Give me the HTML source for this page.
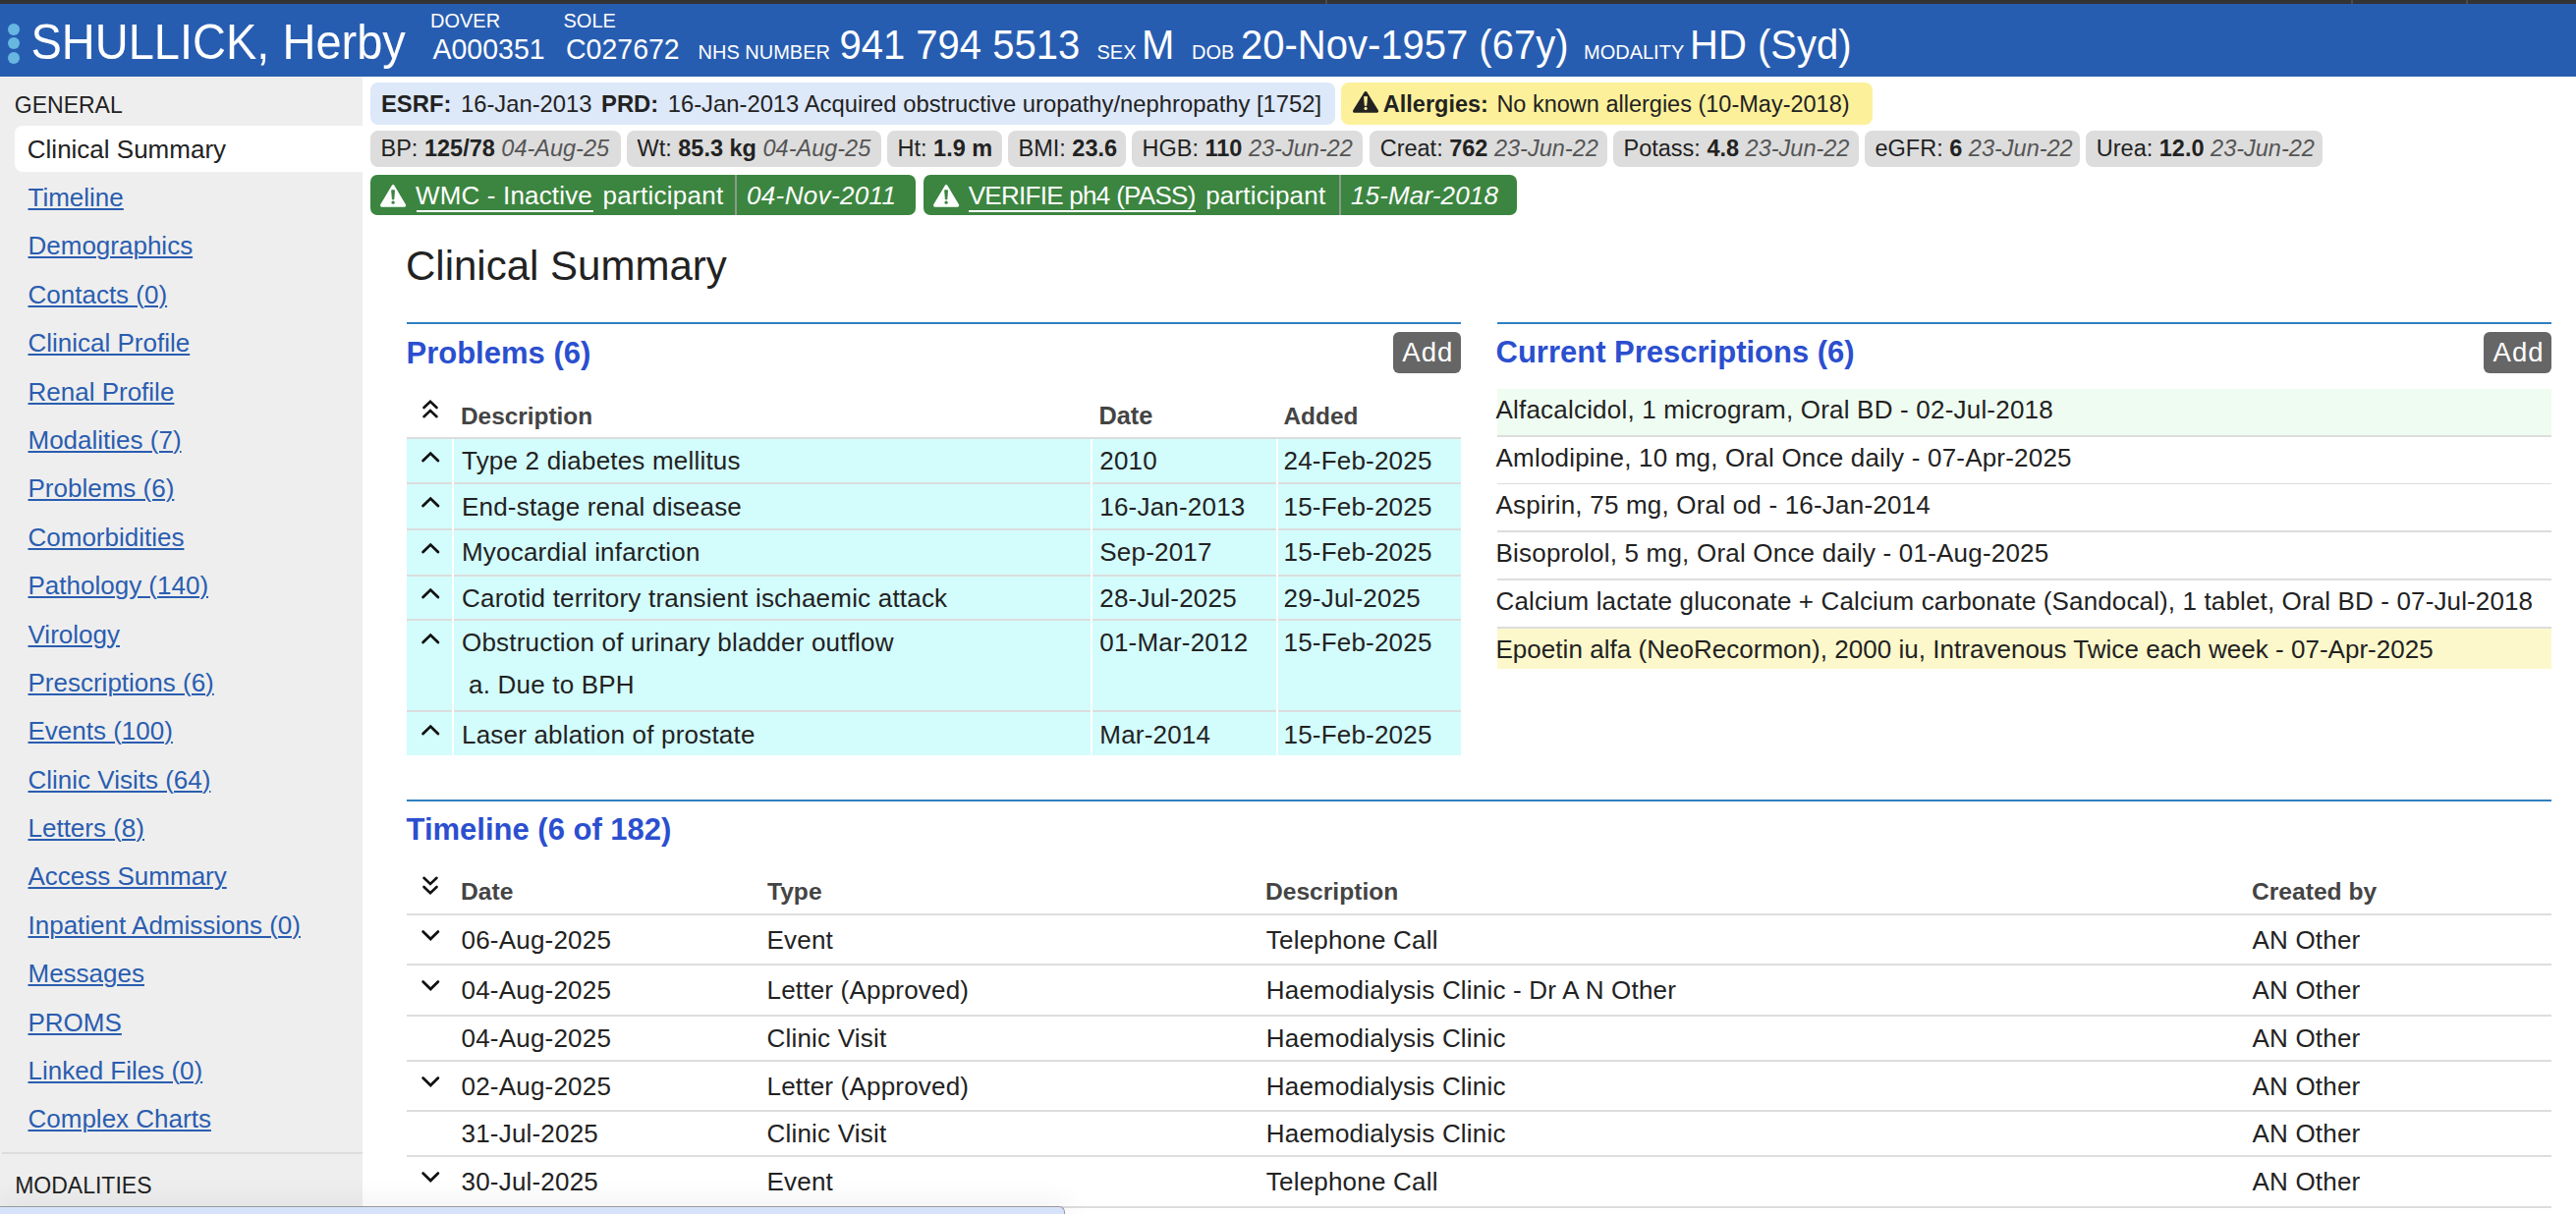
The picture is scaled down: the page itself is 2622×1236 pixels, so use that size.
<!DOCTYPE html>
<html><head><meta charset="utf-8">
<style>
*{box-sizing:border-box;margin:0;padding:0}
html,body{width:2622px;height:1236px;overflow:hidden;background:#fff}
body{font-family:"Liberation Sans",sans-serif;color:#222;position:relative}
.a{position:absolute;white-space:nowrap}
.hw{color:#fff}
.lk{color:#2a5db0;text-decoration:underline;text-decoration-thickness:2px;text-underline-offset:2px}
b{font-weight:bold}
i{font-style:italic}
.g{color:#555;font-style:italic}
.r{letter-spacing:0.2px}
svg{position:absolute;overflow:visible}
</style></head><body>
<div class="a" style="left:0.00px;top:0.00px;width:2622.00px;height:4.00px;background:#333"></div>
<div class="a" style="left:0.00px;top:4.00px;width:2622.00px;height:74.00px;background:#275db1"></div>
<div class="a" style="left:8.00px;top:23.70px;width:12.00px;height:12.00px;border-radius:50%;background:#67b7e1"></div>
<div class="a" style="left:8.00px;top:38.00px;width:12.00px;height:12.00px;border-radius:50%;background:#67b7e1"></div>
<div class="a" style="left:8.00px;top:52.60px;width:12.00px;height:12.00px;border-radius:50%;background:#67b7e1"></div>
<div class="a hw" style="left:31.50px;top:20.31px;font-size:47px;line-height:47px;transform-origin:0 39.79px;transform:scaleY(1.045)">SHULLICK, Herby</div>
<div class="a hw" style="left:438.00px;top:10.87px;font-size:20px;line-height:20px;transform-origin:0 16.93px;transform:scaleY(1.045)">DOVER</div>
<div class="a hw" style="left:440.50px;top:35.77px;font-size:28.5px;line-height:28.5px;transform-origin:0 24.13px;transform:scaleY(1.045)">A000351</div>
<div class="a hw" style="left:573.50px;top:10.87px;font-size:20px;line-height:20px;transform-origin:0 16.93px;transform:scaleY(1.045)">SOLE</div>
<div class="a hw" style="left:576.00px;top:35.77px;font-size:28.5px;line-height:28.5px;transform-origin:0 24.13px;transform:scaleY(1.045)">C027672</div>
<div class="a hw" style="left:710.50px;top:43.27px;font-size:20px;line-height:20px;transform-origin:0 16.93px;transform:scaleY(1.045)">NHS NUMBER</div>
<div class="a hw" style="left:854.50px;top:26.44px;font-size:40px;line-height:40px;transform-origin:0 33.86px;transform:scaleY(1.045)">941 794 5513</div>
<div class="a hw" style="left:1116.50px;top:43.27px;font-size:20px;line-height:20px;transform-origin:0 16.93px;transform:scaleY(1.045)">SEX</div>
<div class="a hw" style="left:1162.00px;top:26.44px;font-size:40px;line-height:40px;transform-origin:0 33.86px;transform:scaleY(1.045)">M</div>
<div class="a hw" style="left:1213.00px;top:43.27px;font-size:20px;line-height:20px;transform-origin:0 16.93px;transform:scaleY(1.045)">DOB</div>
<div class="a hw" style="left:1263.00px;top:26.44px;font-size:40px;line-height:40px;transform-origin:0 33.86px;transform:scaleY(1.045)">20-Nov-1957 (67y)</div>
<div class="a hw" style="left:1612.00px;top:43.27px;font-size:20px;line-height:20px;transform-origin:0 16.93px;transform:scaleY(1.045)">MODALITY</div>
<div class="a hw" style="left:1720.00px;top:26.44px;font-size:40px;line-height:40px;transform-origin:0 33.86px;transform:scaleY(1.045)">HD (Syd)</div>
<div class="a" style="left:0.00px;top:78.00px;width:369.00px;height:1158.00px;background:#eeeeee"></div>
<div class="a" style="left:14.80px;top:95.63px;font-size:23px;line-height:23px;">GENERAL</div>
<div class="a" style="left:15.00px;top:128.30px;width:354.00px;height:46.40px;background:#fff;border-radius:8px 0 0 8px"></div>
<div class="a" style="left:27.80px;top:138.99px;font-size:26px;line-height:26px;">Clinical Summary</div>
<div class="a lk" style="left:28.50px;top:188.09px;font-size:26px;line-height:26px;">Timeline</div>
<div class="a lk" style="left:28.50px;top:237.47px;font-size:26px;line-height:26px;">Demographics</div>
<div class="a lk" style="left:28.50px;top:286.85px;font-size:26px;line-height:26px;">Contacts (0)</div>
<div class="a lk" style="left:28.50px;top:336.23px;font-size:26px;line-height:26px;">Clinical Profile</div>
<div class="a lk" style="left:28.50px;top:385.61px;font-size:26px;line-height:26px;">Renal Profile</div>
<div class="a lk" style="left:28.50px;top:434.99px;font-size:26px;line-height:26px;">Modalities (7)</div>
<div class="a lk" style="left:28.50px;top:484.37px;font-size:26px;line-height:26px;">Problems (6)</div>
<div class="a lk" style="left:28.50px;top:533.75px;font-size:26px;line-height:26px;">Comorbidities</div>
<div class="a lk" style="left:28.50px;top:583.13px;font-size:26px;line-height:26px;">Pathology (140)</div>
<div class="a lk" style="left:28.50px;top:632.51px;font-size:26px;line-height:26px;">Virology</div>
<div class="a lk" style="left:28.50px;top:681.89px;font-size:26px;line-height:26px;">Prescriptions (6)</div>
<div class="a lk" style="left:28.50px;top:731.27px;font-size:26px;line-height:26px;">Events (100)</div>
<div class="a lk" style="left:28.50px;top:780.65px;font-size:26px;line-height:26px;">Clinic Visits (64)</div>
<div class="a lk" style="left:28.50px;top:830.03px;font-size:26px;line-height:26px;">Letters (8)</div>
<div class="a lk" style="left:28.50px;top:879.41px;font-size:26px;line-height:26px;">Access Summary</div>
<div class="a lk" style="left:28.50px;top:928.79px;font-size:26px;line-height:26px;">Inpatient Admissions (0)</div>
<div class="a lk" style="left:28.50px;top:978.17px;font-size:26px;line-height:26px;">Messages</div>
<div class="a lk" style="left:28.50px;top:1027.55px;font-size:26px;line-height:26px;">PROMS</div>
<div class="a lk" style="left:28.50px;top:1076.93px;font-size:26px;line-height:26px;">Linked Files (0)</div>
<div class="a lk" style="left:28.50px;top:1126.31px;font-size:26px;line-height:26px;">Complex Charts</div>
<div class="a" style="left:2.00px;top:1173.00px;width:367.00px;height:2.00px;background:#dddddd"></div>
<div class="a" style="left:15.20px;top:1195.63px;font-size:23px;line-height:23px;">MODALITIES</div>
<div class="a" style="left:377.00px;top:84.00px;width:981.80px;height:42.50px;background:#dde8f9;border-radius:8px"></div>
<div class="a" style="left:388.00px;top:93.65px;font-size:23.8px;line-height:23.8px;"><b>ESRF:</b><span style="margin-left:9.5px">16-Jan-2013</span><b style="margin-left:9.5px">PRD:</b><span style="margin-left:9.5px">16-Jan-2013 Acquired obstructive uropathy/nephropathy [1752]</span></div>
<div class="a" style="left:1365.20px;top:84.00px;width:540.50px;height:42.50px;background:#fcf09b;border-radius:8px"></div>
<svg style="left:1376.9px;top:92.9px" width="26.1" height="21.8" viewBox="0 0 26.1 21.8"><path d="M13.05 1.7 L24.5 20.2 L1.6 20.2 Z" fill="#222" stroke="#222" stroke-width="3.2" stroke-linejoin="round"/><path d="M11.55 5.45 L14.55 5.45 L13.850000000000001 14.388000000000002 L12.25 14.388000000000002 Z" fill="#fcf09b" stroke="#fcf09b" stroke-width="0.8" stroke-linejoin="round"/><circle cx="13.05" cy="17.44" r="1.6" fill="#fcf09b"/></svg>
<div class="a" style="left:1407.80px;top:95.11px;font-size:23.5px;line-height:23.5px;"><b>Allergies:</b><span style="margin-left:8.5px">No known allergies (10-May-2018)</span></div>
<div class="a" style="left:377.00px;top:133.20px;width:254.70px;height:36.50px;background:#dddddd;border-radius:8px"></div>
<div class="a" style="left:387.50px;top:140.21px;font-size:23.5px;line-height:23.5px;">BP: <b>125/78</b> <span class="g">04-Aug-25</span></div>
<div class="a" style="left:638.00px;top:133.20px;width:258.50px;height:36.50px;background:#dddddd;border-radius:8px"></div>
<div class="a" style="left:648.50px;top:140.21px;font-size:23.5px;line-height:23.5px;">Wt: <b>85.3 kg</b> <span class="g">04-Aug-25</span></div>
<div class="a" style="left:903.00px;top:133.20px;width:116.50px;height:36.50px;background:#dddddd;border-radius:8px"></div>
<div class="a" style="left:913.50px;top:140.21px;font-size:23.5px;line-height:23.5px;">Ht: <b>1.9 m</b></div>
<div class="a" style="left:1026.00px;top:133.20px;width:119.60px;height:36.50px;background:#dddddd;border-radius:8px"></div>
<div class="a" style="left:1036.50px;top:140.21px;font-size:23.5px;line-height:23.5px;">BMI: <b>23.6</b></div>
<div class="a" style="left:1152.00px;top:133.20px;width:235.30px;height:36.50px;background:#dddddd;border-radius:8px"></div>
<div class="a" style="left:1162.50px;top:140.21px;font-size:23.5px;line-height:23.5px;">HGB: <b>110</b> <span class="g">23-Jun-22</span></div>
<div class="a" style="left:1394.20px;top:133.20px;width:241.40px;height:36.50px;background:#dddddd;border-radius:8px"></div>
<div class="a" style="left:1404.70px;top:140.21px;font-size:23.5px;line-height:23.5px;">Creat: <b>762</b> <span class="g">23-Jun-22</span></div>
<div class="a" style="left:1642.00px;top:133.20px;width:249.60px;height:36.50px;background:#dddddd;border-radius:8px"></div>
<div class="a" style="left:1652.50px;top:140.21px;font-size:23.5px;line-height:23.5px;">Potass: <b>4.8</b> <span class="g">23-Jun-22</span></div>
<div class="a" style="left:1898.00px;top:133.20px;width:218.70px;height:36.50px;background:#dddddd;border-radius:8px"></div>
<div class="a" style="left:1908.50px;top:140.21px;font-size:23.5px;line-height:23.5px;">eGFR: <b>6</b> <span class="g">23-Jun-22</span></div>
<div class="a" style="left:2123.30px;top:133.20px;width:240.70px;height:36.50px;background:#dddddd;border-radius:8px"></div>
<div class="a" style="left:2133.80px;top:140.21px;font-size:23.5px;line-height:23.5px;">Urea: <b>12.0</b> <span class="g">23-Jun-22</span></div>
<div class="a" style="left:377.00px;top:178.00px;width:554.80px;height:40.80px;background:#3c8540;border-radius:7px"></div>
<svg style="left:386.9px;top:187.5px" width="26.2" height="22.7" viewBox="0 0 26.2 22.7"><path d="M13.1 1.7 L24.599999999999998 21.099999999999998 L1.6 21.099999999999998 Z" fill="#fff" stroke="#fff" stroke-width="3.2" stroke-linejoin="round"/><path d="M11.6 5.675 L14.6 5.675 L13.9 14.982000000000001 L12.299999999999999 14.982000000000001 Z" fill="#3c8540" stroke="#3c8540" stroke-width="0.8" stroke-linejoin="round"/><circle cx="13.1" cy="18.16" r="1.6" fill="#3c8540"/></svg>
<div class="a hw" style="left:423.00px;top:186.09px;font-size:26px;line-height:26px;letter-spacing:0.16px">WMC - Inactive</div>
<div class="a" style="left:423.70px;top:214.00px;width:180.10px;height:2.00px;background:#fff"></div>
<div class="a hw" style="left:613.50px;top:186.09px;font-size:26px;line-height:26px;letter-spacing:0.28px">participant</div>
<div class="a" style="left:748.00px;top:178.00px;width:2.00px;height:40.80px;background:#8a9a8a"></div>
<div class="a hw" style="left:760.00px;top:186.09px;font-size:26px;line-height:26px;letter-spacing:0.35px"><i>04-Nov-2011</i></div>
<div class="a" style="left:940.30px;top:178.00px;width:603.60px;height:40.80px;background:#3c8540;border-radius:7px"></div>
<svg style="left:950px;top:187.5px" width="26.2" height="22.7" viewBox="0 0 26.2 22.7"><path d="M13.1 1.7 L24.599999999999998 21.099999999999998 L1.6 21.099999999999998 Z" fill="#fff" stroke="#fff" stroke-width="3.2" stroke-linejoin="round"/><path d="M11.6 5.675 L14.6 5.675 L13.9 14.982000000000001 L12.299999999999999 14.982000000000001 Z" fill="#3c8540" stroke="#3c8540" stroke-width="0.8" stroke-linejoin="round"/><circle cx="13.1" cy="18.16" r="1.6" fill="#3c8540"/></svg>
<div class="a hw" style="left:985.70px;top:186.09px;font-size:26px;line-height:26px;letter-spacing:-0.71px">VERIFIE ph4 (PASS)</div>
<div class="a" style="left:986.40px;top:214.00px;width:230.50px;height:2.00px;background:#fff"></div>
<div class="a hw" style="left:1227.20px;top:186.09px;font-size:26px;line-height:26px;letter-spacing:0.2px">participant</div>
<div class="a" style="left:1363.00px;top:178.00px;width:2.00px;height:40.80px;background:#8a9a8a"></div>
<div class="a hw" style="left:1375.00px;top:186.09px;font-size:26px;line-height:26px;letter-spacing:0.15px"><i>15-Mar-2018</i></div>
<div class="a" style="left:413.00px;top:249.65px;font-size:42px;line-height:42px;">Clinical Summary</div>
<div class="a" style="left:414.00px;top:328.00px;width:1072.70px;height:2.00px;background:#2f80bf"></div>
<div class="a" style="left:413.50px;top:343.76px;font-size:31px;line-height:31px;font-weight:bold;color:#2b4fcf">Problems (6)</div>
<div class="a" style="left:1418.00px;top:338.00px;width:68.70px;height:41.50px;background:#666;border-radius:6px"></div>
<div class="a hw" style="left:1427.30px;top:344.52px;font-size:27.5px;line-height:27.5px;letter-spacing:1px">Add</div>
<svg style="left:429.5px;top:407px" width="16" height="19" viewBox="0 0 16 19"><path d="M1.5 8 L8 1.8 L14.5 8 M1.5 17.2 L8 11 L14.5 17.2" fill="none" stroke="#111" stroke-width="2.6" stroke-linecap="round"/></svg>
<div class="a" style="left:469.00px;top:411.65px;font-size:24.4px;line-height:24.4px;font-weight:bold;color:#444">Description</div>
<div class="a" style="left:1118.50px;top:410.88px;font-size:25.3px;line-height:25.3px;font-weight:bold;color:#444">Date</div>
<div class="a" style="left:1306.50px;top:411.65px;font-size:24.4px;line-height:24.4px;font-weight:bold;color:#444">Added</div>
<div class="a" style="left:414.00px;top:445.00px;width:1072.70px;height:2.00px;background:#dddddd"></div>
<div class="a" style="left:414.00px;top:447.00px;width:46.00px;height:44.20px;background:#d3fcfc"></div>
<div class="a" style="left:414.00px;top:491.20px;width:46.00px;height:2.00px;background:#dddddd"></div>
<div class="a" style="left:462.00px;top:447.00px;width:647.70px;height:44.20px;background:#d3fcfc"></div>
<div class="a" style="left:462.00px;top:491.20px;width:647.70px;height:2.00px;background:#dddddd"></div>
<div class="a" style="left:1111.70px;top:447.00px;width:187.10px;height:44.20px;background:#d3fcfc"></div>
<div class="a" style="left:1111.70px;top:491.20px;width:187.10px;height:2.00px;background:#dddddd"></div>
<div class="a" style="left:1300.80px;top:447.00px;width:185.90px;height:44.20px;background:#d3fcfc"></div>
<div class="a" style="left:1300.80px;top:491.20px;width:185.90px;height:2.00px;background:#dddddd"></div>
<svg style="left:428.7px;top:459.6px" width="18.5" height="10.5" viewBox="0 0 18.5 10.5"><path d="M1.6 9 L9.25 1.6 L16.9 9" fill="none" stroke="#111" stroke-width="2.8" stroke-linecap="round" stroke-linejoin="miter"/></svg>
<div class="a r" style="left:470.00px;top:456.49px;font-size:26px;line-height:26px;">Type 2 diabetes mellitus</div>
<div class="a r" style="left:1119.30px;top:456.49px;font-size:26px;line-height:26px;">2010</div>
<div class="a r" style="left:1306.50px;top:456.49px;font-size:26px;line-height:26px;">24-Feb-2025</div>
<div class="a" style="left:414.00px;top:493.20px;width:46.00px;height:44.80px;background:#d3fcfc"></div>
<div class="a" style="left:414.00px;top:538.00px;width:46.00px;height:2.00px;background:#dddddd"></div>
<div class="a" style="left:462.00px;top:493.20px;width:647.70px;height:44.80px;background:#d3fcfc"></div>
<div class="a" style="left:462.00px;top:538.00px;width:647.70px;height:2.00px;background:#dddddd"></div>
<div class="a" style="left:1111.70px;top:493.20px;width:187.10px;height:44.80px;background:#d3fcfc"></div>
<div class="a" style="left:1111.70px;top:538.00px;width:187.10px;height:2.00px;background:#dddddd"></div>
<div class="a" style="left:1300.80px;top:493.20px;width:185.90px;height:44.80px;background:#d3fcfc"></div>
<div class="a" style="left:1300.80px;top:538.00px;width:185.90px;height:2.00px;background:#dddddd"></div>
<svg style="left:428.7px;top:505.8px" width="18.5" height="10.5" viewBox="0 0 18.5 10.5"><path d="M1.6 9 L9.25 1.6 L16.9 9" fill="none" stroke="#111" stroke-width="2.8" stroke-linecap="round" stroke-linejoin="miter"/></svg>
<div class="a r" style="left:470.00px;top:502.69px;font-size:26px;line-height:26px;">End-stage renal disease</div>
<div class="a r" style="left:1119.30px;top:502.69px;font-size:26px;line-height:26px;">16-Jan-2013</div>
<div class="a r" style="left:1306.50px;top:502.69px;font-size:26px;line-height:26px;">15-Feb-2025</div>
<div class="a" style="left:414.00px;top:540.00px;width:46.00px;height:44.60px;background:#d3fcfc"></div>
<div class="a" style="left:414.00px;top:584.60px;width:46.00px;height:2.00px;background:#dddddd"></div>
<div class="a" style="left:462.00px;top:540.00px;width:647.70px;height:44.60px;background:#d3fcfc"></div>
<div class="a" style="left:462.00px;top:584.60px;width:647.70px;height:2.00px;background:#dddddd"></div>
<div class="a" style="left:1111.70px;top:540.00px;width:187.10px;height:44.60px;background:#d3fcfc"></div>
<div class="a" style="left:1111.70px;top:584.60px;width:187.10px;height:2.00px;background:#dddddd"></div>
<div class="a" style="left:1300.80px;top:540.00px;width:185.90px;height:44.60px;background:#d3fcfc"></div>
<div class="a" style="left:1300.80px;top:584.60px;width:185.90px;height:2.00px;background:#dddddd"></div>
<svg style="left:428.7px;top:552.6px" width="18.5" height="10.5" viewBox="0 0 18.5 10.5"><path d="M1.6 9 L9.25 1.6 L16.9 9" fill="none" stroke="#111" stroke-width="2.8" stroke-linecap="round" stroke-linejoin="miter"/></svg>
<div class="a r" style="left:470.00px;top:549.49px;font-size:26px;line-height:26px;">Myocardial infarction</div>
<div class="a r" style="left:1119.30px;top:549.49px;font-size:26px;line-height:26px;">Sep-2017</div>
<div class="a r" style="left:1306.50px;top:549.49px;font-size:26px;line-height:26px;">15-Feb-2025</div>
<div class="a" style="left:414.00px;top:586.60px;width:46.00px;height:43.40px;background:#d3fcfc"></div>
<div class="a" style="left:414.00px;top:630.00px;width:46.00px;height:2.00px;background:#dddddd"></div>
<div class="a" style="left:462.00px;top:586.60px;width:647.70px;height:43.40px;background:#d3fcfc"></div>
<div class="a" style="left:462.00px;top:630.00px;width:647.70px;height:2.00px;background:#dddddd"></div>
<div class="a" style="left:1111.70px;top:586.60px;width:187.10px;height:43.40px;background:#d3fcfc"></div>
<div class="a" style="left:1111.70px;top:630.00px;width:187.10px;height:2.00px;background:#dddddd"></div>
<div class="a" style="left:1300.80px;top:586.60px;width:185.90px;height:43.40px;background:#d3fcfc"></div>
<div class="a" style="left:1300.80px;top:630.00px;width:185.90px;height:2.00px;background:#dddddd"></div>
<svg style="left:428.7px;top:599.2px" width="18.5" height="10.5" viewBox="0 0 18.5 10.5"><path d="M1.6 9 L9.25 1.6 L16.9 9" fill="none" stroke="#111" stroke-width="2.8" stroke-linecap="round" stroke-linejoin="miter"/></svg>
<div class="a r" style="left:470.00px;top:596.09px;font-size:26px;line-height:26px;">Carotid territory transient ischaemic attack</div>
<div class="a r" style="left:1119.30px;top:596.09px;font-size:26px;line-height:26px;">28-Jul-2025</div>
<div class="a r" style="left:1306.50px;top:596.09px;font-size:26px;line-height:26px;">29-Jul-2025</div>
<div class="a" style="left:414.00px;top:632.00px;width:46.00px;height:91.20px;background:#d3fcfc"></div>
<div class="a" style="left:414.00px;top:723.20px;width:46.00px;height:2.00px;background:#dddddd"></div>
<div class="a" style="left:462.00px;top:632.00px;width:647.70px;height:91.20px;background:#d3fcfc"></div>
<div class="a" style="left:462.00px;top:723.20px;width:647.70px;height:2.00px;background:#dddddd"></div>
<div class="a" style="left:1111.70px;top:632.00px;width:187.10px;height:91.20px;background:#d3fcfc"></div>
<div class="a" style="left:1111.70px;top:723.20px;width:187.10px;height:2.00px;background:#dddddd"></div>
<div class="a" style="left:1300.80px;top:632.00px;width:185.90px;height:91.20px;background:#d3fcfc"></div>
<div class="a" style="left:1300.80px;top:723.20px;width:185.90px;height:2.00px;background:#dddddd"></div>
<svg style="left:428.7px;top:644.6px" width="18.5" height="10.5" viewBox="0 0 18.5 10.5"><path d="M1.6 9 L9.25 1.6 L16.9 9" fill="none" stroke="#111" stroke-width="2.8" stroke-linecap="round" stroke-linejoin="miter"/></svg>
<div class="a r" style="left:470.00px;top:641.49px;font-size:26px;line-height:26px;">Obstruction of urinary bladder outflow</div>
<div class="a r" style="left:1119.30px;top:641.49px;font-size:26px;line-height:26px;">01-Mar-2012</div>
<div class="a r" style="left:1306.50px;top:641.49px;font-size:26px;line-height:26px;">15-Feb-2025</div>
<div class="a r" style="left:477.00px;top:684.49px;font-size:26px;line-height:26px;">a. Due to BPH</div>
<div class="a" style="left:414.00px;top:725.20px;width:46.00px;height:43.70px;background:#d3fcfc"></div>
<div class="a" style="left:462.00px;top:725.20px;width:647.70px;height:43.70px;background:#d3fcfc"></div>
<div class="a" style="left:1111.70px;top:725.20px;width:187.10px;height:43.70px;background:#d3fcfc"></div>
<div class="a" style="left:1300.80px;top:725.20px;width:185.90px;height:43.70px;background:#d3fcfc"></div>
<svg style="left:428.7px;top:737.8000000000001px" width="18.5" height="10.5" viewBox="0 0 18.5 10.5"><path d="M1.6 9 L9.25 1.6 L16.9 9" fill="none" stroke="#111" stroke-width="2.8" stroke-linecap="round" stroke-linejoin="miter"/></svg>
<div class="a r" style="left:470.00px;top:734.69px;font-size:26px;line-height:26px;">Laser ablation of prostate</div>
<div class="a r" style="left:1119.30px;top:734.69px;font-size:26px;line-height:26px;">Mar-2014</div>
<div class="a r" style="left:1306.50px;top:734.69px;font-size:26px;line-height:26px;">15-Feb-2025</div>
<div class="a" style="left:1524.00px;top:328.00px;width:1073.00px;height:2.00px;background:#2f80bf"></div>
<div class="a" style="left:1522.50px;top:343.16px;font-size:31px;line-height:31px;font-weight:bold;color:#2b4fcf">Current Prescriptions (6)</div>
<div class="a" style="left:2528.30px;top:338.30px;width:68.70px;height:41.50px;background:#666;border-radius:6px"></div>
<div class="a hw" style="left:2537.60px;top:344.82px;font-size:27.5px;line-height:27.5px;letter-spacing:1px">Add</div>
<div class="a" style="left:1524.00px;top:396.20px;width:1073.00px;height:47.00px;background:#effcf1"></div>
<div class="a" style="left:1524.00px;top:443.20px;width:1073.00px;height:1.80px;background:#dddddd"></div>
<div class="a r" style="left:1522.50px;top:404.09px;font-size:26px;line-height:26px;">Alfacalcidol, 1 microgram, Oral BD - 02-Jul-2018</div>
<div class="a" style="left:1524.00px;top:491.60px;width:1073.00px;height:1.80px;background:#dddddd"></div>
<div class="a r" style="left:1522.50px;top:452.89px;font-size:26px;line-height:26px;">Amlodipine, 10 mg, Oral Once daily - 07-Apr-2025</div>
<div class="a" style="left:1524.00px;top:540.30px;width:1073.00px;height:1.80px;background:#dddddd"></div>
<div class="a r" style="left:1522.50px;top:501.29px;font-size:26px;line-height:26px;">Aspirin, 75 mg, Oral od - 16-Jan-2014</div>
<div class="a" style="left:1524.00px;top:589.00px;width:1073.00px;height:1.80px;background:#dddddd"></div>
<div class="a r" style="left:1522.50px;top:549.99px;font-size:26px;line-height:26px;">Bisoprolol, 5 mg, Oral Once daily - 01-Aug-2025</div>
<div class="a" style="left:1524.00px;top:638.20px;width:1073.00px;height:1.80px;background:#dddddd"></div>
<div class="a r" style="left:1522.50px;top:598.69px;font-size:26px;line-height:26px;letter-spacing:0.13px">Calcium lactate gluconate + Calcium carbonate (Sandocal), 1 tablet, Oral BD - 07-Jul-2018</div>
<div class="a" style="left:1524.00px;top:640.00px;width:1073.00px;height:40.70px;background:#fcf8cb"></div>
<div class="a r" style="left:1522.50px;top:647.89px;font-size:26px;line-height:26px;letter-spacing:0.03px">Epoetin alfa (NeoRecormon), 2000 iu, Intravenous Twice each week - 07-Apr-2025</div>
<div class="a" style="left:414.00px;top:814.00px;width:2183.00px;height:2.00px;background:#2f80bf"></div>
<div class="a" style="left:413.50px;top:829.36px;font-size:31px;line-height:31px;font-weight:bold;color:#2b4fcf">Timeline (6 of 182)</div>
<svg style="left:429.5px;top:892.3px" width="16" height="19" viewBox="0 0 16 19"><path d="M1.5 1.8 L8 8 L14.5 1.8 M1.5 11 L8 17.2 L14.5 11" fill="none" stroke="#111" stroke-width="2.6" stroke-linecap="round"/></svg>
<div class="a" style="left:469.00px;top:896.38px;font-size:24.6px;line-height:24.6px;font-weight:bold;color:#444">Date</div>
<div class="a" style="left:781.00px;top:896.38px;font-size:24.6px;line-height:24.6px;font-weight:bold;color:#444">Type</div>
<div class="a" style="left:1288.00px;top:896.38px;font-size:24.6px;line-height:24.6px;font-weight:bold;color:#444">Description</div>
<div class="a" style="left:2292.00px;top:896.38px;font-size:24.6px;line-height:24.6px;font-weight:bold;color:#444">Created by</div>
<div class="a" style="left:414.00px;top:930.20px;width:2183.00px;height:1.80px;background:#dddddd"></div>
<svg style="left:428.7px;top:947.3px" width="18.5" height="10.5" viewBox="0 0 18.5 10.5"><path d="M1.6 1.6 L9.25 9 L16.9 1.6" fill="none" stroke="#111" stroke-width="2.8" stroke-linecap="round" stroke-linejoin="miter"/></svg>
<div class="a r" style="left:469.50px;top:944.19px;font-size:26px;line-height:26px;">06-Aug-2025</div>
<div class="a r" style="left:780.50px;top:944.19px;font-size:26px;line-height:26px;">Event</div>
<div class="a r" style="left:1288.80px;top:944.19px;font-size:26px;line-height:26px;">Telephone Call</div>
<div class="a r" style="left:2292.50px;top:944.19px;font-size:26px;line-height:26px;">AN Other</div>
<div class="a" style="left:414.00px;top:981.30px;width:2183.00px;height:2.00px;background:#dddddd"></div>
<svg style="left:428.7px;top:998.4px" width="18.5" height="10.5" viewBox="0 0 18.5 10.5"><path d="M1.6 1.6 L9.25 9 L16.9 1.6" fill="none" stroke="#111" stroke-width="2.8" stroke-linecap="round" stroke-linejoin="miter"/></svg>
<div class="a r" style="left:469.50px;top:995.29px;font-size:26px;line-height:26px;">04-Aug-2025</div>
<div class="a r" style="left:780.50px;top:995.29px;font-size:26px;line-height:26px;">Letter (Approved)</div>
<div class="a r" style="left:1288.80px;top:995.29px;font-size:26px;line-height:26px;">Haemodialysis Clinic - Dr A N Other</div>
<div class="a r" style="left:2292.50px;top:995.29px;font-size:26px;line-height:26px;">AN Other</div>
<div class="a" style="left:414.00px;top:1033.20px;width:2183.00px;height:2.00px;background:#dddddd"></div>
<div class="a r" style="left:469.50px;top:1044.19px;font-size:26px;line-height:26px;">04-Aug-2025</div>
<div class="a r" style="left:780.50px;top:1044.19px;font-size:26px;line-height:26px;">Clinic Visit</div>
<div class="a r" style="left:1288.80px;top:1044.19px;font-size:26px;line-height:26px;">Haemodialysis Clinic</div>
<div class="a r" style="left:2292.50px;top:1044.19px;font-size:26px;line-height:26px;">AN Other</div>
<div class="a" style="left:414.00px;top:1079.10px;width:2183.00px;height:2.00px;background:#dddddd"></div>
<svg style="left:428.7px;top:1096.2px" width="18.5" height="10.5" viewBox="0 0 18.5 10.5"><path d="M1.6 1.6 L9.25 9 L16.9 1.6" fill="none" stroke="#111" stroke-width="2.8" stroke-linecap="round" stroke-linejoin="miter"/></svg>
<div class="a r" style="left:469.50px;top:1093.09px;font-size:26px;line-height:26px;">02-Aug-2025</div>
<div class="a r" style="left:780.50px;top:1093.09px;font-size:26px;line-height:26px;">Letter (Approved)</div>
<div class="a r" style="left:1288.80px;top:1093.09px;font-size:26px;line-height:26px;">Haemodialysis Clinic</div>
<div class="a r" style="left:2292.50px;top:1093.09px;font-size:26px;line-height:26px;">AN Other</div>
<div class="a" style="left:414.00px;top:1129.60px;width:2183.00px;height:2.00px;background:#dddddd"></div>
<div class="a r" style="left:469.50px;top:1140.59px;font-size:26px;line-height:26px;">31-Jul-2025</div>
<div class="a r" style="left:780.50px;top:1140.59px;font-size:26px;line-height:26px;">Clinic Visit</div>
<div class="a r" style="left:1288.80px;top:1140.59px;font-size:26px;line-height:26px;">Haemodialysis Clinic</div>
<div class="a r" style="left:2292.50px;top:1140.59px;font-size:26px;line-height:26px;">AN Other</div>
<div class="a" style="left:414.00px;top:1175.90px;width:2183.00px;height:2.00px;background:#dddddd"></div>
<svg style="left:428.7px;top:1193.0px" width="18.5" height="10.5" viewBox="0 0 18.5 10.5"><path d="M1.6 1.6 L9.25 9 L16.9 1.6" fill="none" stroke="#111" stroke-width="2.8" stroke-linecap="round" stroke-linejoin="miter"/></svg>
<div class="a r" style="left:469.50px;top:1189.89px;font-size:26px;line-height:26px;">30-Jul-2025</div>
<div class="a r" style="left:780.50px;top:1189.89px;font-size:26px;line-height:26px;">Event</div>
<div class="a r" style="left:1288.80px;top:1189.89px;font-size:26px;line-height:26px;">Telephone Call</div>
<div class="a r" style="left:2292.50px;top:1189.89px;font-size:26px;line-height:26px;">AN Other</div>
<div class="a" style="left:414.00px;top:1228.20px;width:2183.00px;height:2.00px;background:#dddddd"></div>
<div class="a" style="left:0.00px;top:1228.40px;width:1084.00px;height:12.00px;background:#d6e3fa;border-top:1.5px solid #999;border-right:1.5px solid #999;border-radius:0 6px 0 0;box-shadow:0 0 28px 4px rgba(0,0,0,0.07)"></div>
<div class="a" style="left:1349.00px;top:0.00px;width:2.00px;height:4.00px;background:#4a4a4a"></div>
<div class="a" style="left:2393.00px;top:0.00px;width:2.00px;height:4.00px;background:#4a4a4a"></div>
<div class="a" style="left:2510.00px;top:0.00px;width:2.00px;height:4.00px;background:#4a4a4a"></div>
</body></html>
